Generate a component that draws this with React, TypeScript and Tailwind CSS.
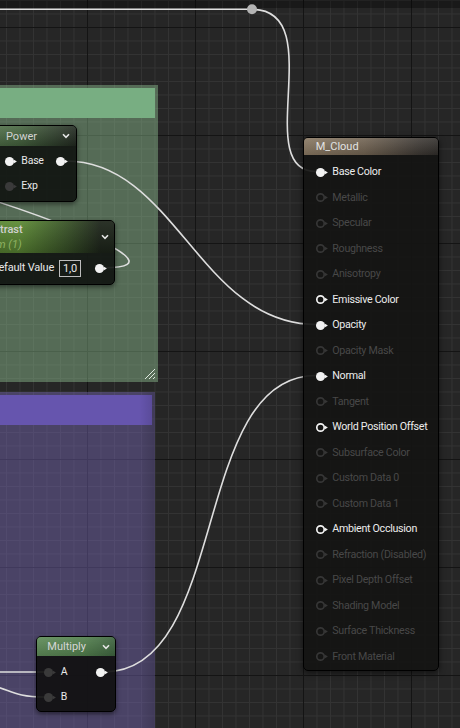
import React from "react";

type PinKind = "filled" | "ring" | "dim" | "dark";

function Pin({ kind }: { kind: PinKind }) {
  const color =
    kind === "dim" ? "#363636" : kind === "dark" ? "#3a3a3a" : "#f2f2f2";
  return (
    <svg width="14" height="11" viewBox="0 0 14 11" className="shrink-0 block">
      {kind === "filled" || kind === "dark" ? (
        <circle cx="5.5" cy="5.5" r="4.5" fill={color} />
      ) : (
        <circle cx="5.5" cy="5.5" r="3.7" fill="none" stroke={color} strokeWidth="1.7" />
      )}
      <path d="M9.6 3.4 L12.9 5.5 L9.6 7.6 Z" fill={color} />
    </svg>
  );
}

function Chevron() {
  return (
    <svg width="8" height="6" viewBox="0 0 8 6" className="shrink-0 block">
      <path d="M1 1.2 L4 4.3 L7 1.2" fill="none" stroke="#e4e4e4" strokeWidth="1.6" />
    </svg>
  );
}

const outputs: [string, PinKind][] = [
  ["Base Color", "filled"],
  ["Metallic", "dim"],
  ["Specular", "dim"],
  ["Roughness", "dim"],
  ["Anisotropy", "dim"],
  ["Emissive Color", "ring"],
  ["Opacity", "filled"],
  ["Opacity Mask", "dim"],
  ["Normal", "filled"],
  ["Tangent", "dim"],
  ["World Position Offset", "ring"],
  ["Subsurface Color", "dim"],
  ["Custom Data 0", "dim"],
  ["Custom Data 1", "dim"],
  ["Ambient Occlusion", "ring"],
  ["Refraction (Disabled)", "dim"],
  ["Pixel Depth Offset", "dim"],
  ["Shading Model", "dim"],
  ["Surface Thickness", "dim"],
  ["Front Material", "dim"],
];

export default function App() {
  return (
    <div className="relative w-[460px] h-[728px] overflow-hidden bg-[#262626] [background-image:linear-gradient(to_right,#141414_1px,transparent_1px),linear-gradient(to_bottom,#141414_1px,transparent_1px),linear-gradient(to_right,#333333_1px,transparent_1px),linear-gradient(to_bottom,#333333_1px,transparent_1px)] [background-size:108px_108px,108px_108px,13.5px_13.5px,13.5px_13.5px] [background-position:87px_27px,87px_27px,6px_0px,6px_0px] font-[Roboto,sans-serif]">
      {/* top shadow band */}
      <div className="absolute left-0 top-0 w-full h-[8px] bg-[rgba(0,0,0,0.32)]" />

      {/* green comment */}
      <div className="absolute left-[-10px] top-[85px] w-[168px] h-[297px] p-[3px] bg-[rgba(149,202,153,0.42)]">
        <div className="h-[30px] bg-[#78ae82]" />
        <svg width="12" height="12" viewBox="0 0 12 12" className="absolute right-[2px] bottom-[2px]">
          <path d="M11 1 L1 11 M11 5 L5 11 M11 9 L9 11" stroke="#dfe8df" strokeWidth="1" />
        </svg>
      </div>

      {/* purple comment */}
      <div className="absolute left-[-10px] top-[392px] w-[165px] h-[400px] p-[3px] bg-[rgba(120,105,185,0.44)]">
        <div className="h-[30px] bg-[#6655ae]" />
        <div className="absolute right-0 top-0 w-[16px] h-full bg-[linear-gradient(to_right,transparent,rgba(0,0,0,0.14))]" />
      </div>

      {/* wires */}
      <svg width="460" height="728" viewBox="0 0 460 728" className="absolute left-0 top-0 pointer-events-none">
        <g fill="none" stroke="#dedede" strokeWidth="1.6">
          <path d="M-5 9.3 L252 9.3 C330 9.3 250 171.5 316 171.5" />
          <path d="M66 161 C175 161 200 324.5 316 324.5" />
          <path d="M104 267.7 C205 267.7 -30 190 -60 185" />
          <path d="M-10 672 L44 672" />
          <path d="M-30 684 C10 684 5 697 44 697" />
          <path d="M104 672 C230 672 190 375.5 316 375.5" />
        </g>
        <path d="M-10 186 L5 186" stroke="#555" strokeWidth="1.4" />
        <circle cx="252" cy="9.3" r="5" fill="#b4b4b4" />
      </svg>

      {/* Power node */}
      <div className="absolute left-[-40px] top-[125px] w-[116.5px] rounded-[5px] border border-black bg-[rgba(16,19,15,0.9)] shadow-[0_2px_5px_rgba(0,0,0,0.5)] overflow-hidden">
        <div className="h-[20px] flex items-center justify-between pl-[45px] pr-[5.5px] [background-image:linear-gradient(to_bottom,rgba(255,255,255,0.1),rgba(0,0,0,0.2)),linear-gradient(to_right,#5c7d54_0%,#46653f_50%,#222a21_100%)]">
          <span className="text-[11px] leading-none text-[#d2d2d2]">Power</span>
          <Chevron />
        </div>
        <div className="pt-[2.5px] pb-[2.5px] text-[10.5px] tracking-[-0.2px] text-[#e8e8e8]">
          <div className="h-[25px] flex items-center justify-between pl-[42.5px] pr-[7px]">
            <div className="flex items-center gap-[3.8px]">
              <Pin kind="filled" />
              <span>Base</span>
            </div>
            <Pin kind="filled" />
          </div>
          <div className="h-[25px] flex items-center pl-[42.5px]">
            <div className="flex items-center gap-[3.8px]">
              <Pin kind="dark" />
              <span>Exp</span>
            </div>
          </div>
        </div>
      </div>

      {/* Contrast node */}
      <div className="absolute left-[-60px] top-[220px] w-[175px] rounded-[5px] border border-black bg-[rgba(16,19,15,0.9)] shadow-[0_2px_5px_rgba(0,0,0,0.5)] overflow-hidden">
        <div className="h-[32px] flex items-center justify-between pr-[5px] [background-image:linear-gradient(to_bottom,rgba(255,255,255,0.06),rgba(0,0,0,0.25)),linear-gradient(to_right,#52792f_0%,#5e8c36_45%,#3a5528_72%,#1e261b_92%)]">
          <div className="flex flex-col pl-[39.5px]">
            <span className="text-[11px] leading-[14px] font-medium text-[#d0d0d0]">Contrast</span>
            <span className="text-[11px] leading-[15px] italic text-[#8fb262] -ml-[6px]">Param (1)</span>
          </div>
          <Chevron />
        </div>
        <div className="pt-[2.5px] pb-[3.5px]">
          <div className="h-[25px] flex items-center justify-end pr-[6.5px] text-[11px] tracking-[-0.2px] text-[#e8e8e8]">
            <span>Default Value</span>
            <div className="ml-[5px] h-[17px] px-[3px] border border-[#bdbdbd] flex items-center leading-none">1,0</div>
            <div className="ml-[12.5px]">
              <Pin kind="filled" />
            </div>
          </div>
        </div>
      </div>

      {/* Multiply node */}
      <div className="absolute left-[36px] top-[636px] w-[80.3px] rounded-[5px] border border-black bg-[rgba(16,16,16,0.92)] shadow-[0_2px_5px_rgba(0,0,0,0.5)] overflow-hidden">
        <div className="h-[19px] flex items-center justify-between pl-[10.3px] pr-[5.6px] [background-image:linear-gradient(to_bottom,rgba(255,255,255,0.08),rgba(0,0,0,0.15)),linear-gradient(to_right,#5f8c59_0%,#53804e_60%,#3f6540_100%)]">
          <span className="text-[11px] leading-none text-[#d6d6d6]">Multiply</span>
          <Chevron />
        </div>
        <div className="pt-[3.5px] pb-[1.5px] text-[10.5px] text-[#e8e8e8]">
          <div className="h-[25px] flex items-center justify-between pl-[6px] pr-[6.8px]">
            <div className="flex items-center gap-[3.8px]">
              <Pin kind="dark" />
              <span>A</span>
            </div>
            <Pin kind="filled" />
          </div>
          <div className="h-[25px] flex items-center pl-[6px]">
            <div className="flex items-center gap-[3.8px]">
              <Pin kind="dark" />
              <span>B</span>
            </div>
          </div>
        </div>
      </div>

      {/* M_Cloud node */}
      <div className="absolute left-[303px] top-[137px] w-[136px] rounded-[5px] border border-black bg-[rgba(20,20,19,0.93)] shadow-[0_2px_6px_rgba(0,0,0,0.55)] overflow-hidden">
        <div className="h-[17px] flex items-center pl-[11.7px] [background-image:linear-gradient(to_bottom,rgba(255,255,255,0.12),rgba(0,0,0,0.12)),linear-gradient(to_right,#86755f_0%,#6e604f_45%,#3c3732_85%,#2e2b28_100%)]">
          <span className="text-[11px] leading-none text-[#e2e2e2]">M_Cloud</span>
        </div>
        <div className="pt-[4.5px] text-[10.7px] tracking-[-0.3px]">
          {outputs.map(([label, kind]) => (
            <div key={label} className="h-[25.5px] flex items-center gap-[3.8px] pl-[10.5px]">
              <Pin kind={kind} />
              <span className={kind === "dim" ? "text-[#484848]" : "text-[#ececec]"}>{label}</span>
            </div>
          ))}
        </div>
      </div>
    </div>
  );
}
